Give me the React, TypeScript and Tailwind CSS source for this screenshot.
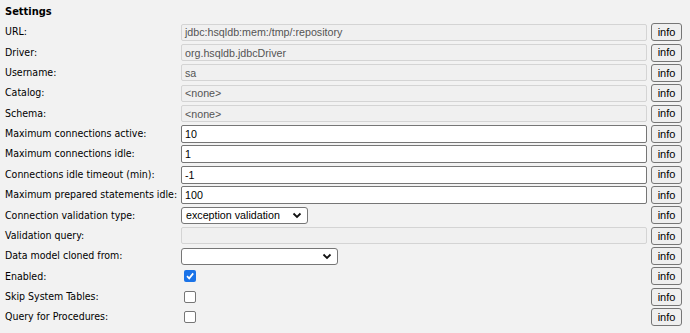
import React from "react";

type Row = {
  label: string;
  kind: "ro" | "text" | "select" | "check";
  value?: string;
  width?: string;
  checked?: boolean;
};

const rows: Row[] = [
  { label: "URL:", kind: "ro", value: "jdbc:hsqldb:mem:/tmp/:repository" },
  { label: "Driver:", kind: "ro", value: "org.hsqldb.jdbcDriver" },
  { label: "Username:", kind: "ro", value: "sa" },
  { label: "Catalog:", kind: "ro", value: "<none>" },
  { label: "Schema:", kind: "ro", value: "<none>" },
  { label: "Maximum connections active:", kind: "text", value: "10" },
  { label: "Maximum connections idle:", kind: "text", value: "1" },
  { label: "Connections idle timeout (min):", kind: "text", value: "-1" },
  { label: "Maximum prepared statements idle:", kind: "text", value: "100" },
  { label: "Connection validation type:", kind: "select", value: "exception validation", width: "w-[127px]" },
  { label: "Validation query:", kind: "ro", value: "" },
  { label: "Data model cloned from:", kind: "select", value: "", width: "w-[157px]" },
  { label: "Enabled:", kind: "check", checked: true },
  { label: "Skip System Tables:", kind: "check" },
  { label: "Query for Procedures:", kind: "check" },
];

const Chevron = () => (
  <svg width="10" height="7" viewBox="0 0 10 7" className="shrink-0">
    <path d="M1.5 1.5 L5 5 L8.5 1.5" fill="none" stroke="#111" strokeWidth="1.8" />
  </svg>
);

const Field = ({ row }: { row: Row }) => {
  if (row.kind === "ro") {
    return (
      <div className="flex h-[17px] w-full items-center whitespace-nowrap rounded-[2px] border border-[#d4d4d4] bg-[#f0f0f0] px-[3px] text-[10.7px] text-[#545454]">
        {row.value}
      </div>
    );
  }
  if (row.kind === "text") {
    return (
      <div className="flex h-[18px] w-full items-center whitespace-nowrap rounded-[2px] border border-[#767676] bg-white px-[3px] text-[10.7px] text-black">
        {row.value}
      </div>
    );
  }
  if (row.kind === "select") {
    return (
      <div
        className={`flex h-[17px] ${row.width} shrink-0 items-center justify-between whitespace-nowrap rounded-[3px] border border-[#767676] bg-white pl-[4px] pr-[5px] text-[10.7px] text-black`}
      >
        <span>{row.value}</span>
        <Chevron />
      </div>
    );
  }
  return (
    <div className="pl-[3px]">
      {row.checked ? (
        <div className="flex h-[12px] w-[12px] items-center justify-center rounded-[2px] bg-[#1a73e8]">
          <svg width="10" height="10" viewBox="0 0 10 10">
            <path d="M2 5.2 L4.2 7.4 L8.2 2.4" fill="none" stroke="white" strokeWidth="1.7" />
          </svg>
        </div>
      ) : (
        <div className="h-[12px] w-[12px] rounded-[2px] border border-[#767676] bg-white" />
      )}
    </div>
  );
};

export default function App() {
  return (
    <div
      className="h-[333px] w-[690px] overflow-hidden bg-[#f2f2f2] pl-[5px] pt-[2px] text-[10.5px] text-black"
      style={{ fontFamily: "'DejaVu Sans Condensed', 'DejaVu Sans', sans-serif" }}
    >
      <div className="flex h-[20px] items-center text-[11px] font-bold">Settings</div>
      {rows.map((r) => (
        <div key={r.label} className="flex h-[20.36px] items-center">
          <div className="w-[176px] shrink-0 whitespace-nowrap">{r.label}</div>
          <div
            className="flex flex-1 items-center"
            style={{ fontFamily: "'Liberation Sans', Arial, sans-serif" }}
          >
            <Field row={r} />
          </div>
          <div className="ml-[4px] mr-[8px] shrink-0">
            <div
              className="flex h-[18px] w-[31px] items-center justify-center rounded-[3px] border border-[#767676] bg-[#efefef] text-[11px]"
              style={{ fontFamily: "'Liberation Sans', Arial, sans-serif" }}
            >
              info
            </div>
          </div>
        </div>
      ))}
    </div>
  );
}
